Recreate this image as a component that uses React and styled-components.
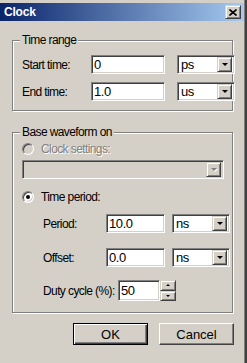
import React from "react";
import styled, { createGlobalStyle, css } from "styled-components";

const GlobalStyle = createGlobalStyle`
  html, body {
    margin: 0;
    padding: 0;
    background: #D4D0C8;
  }
  body {
    font-family: "Liberation Sans", Arial, sans-serif;
    font-size: 12px;
    letter-spacing: -0.6px;
    color: #000;
  }
`

// bordas classicas do windows
const sunken = css`
  border: 1px solid;
  border-color: #808080 #fff #fff #808080;
  box-shadow: inset 1px 1px 0 #404040, inset -1px -1px 0 #D4D0C8;
`
const raised = css`
  border: 1px solid;
  border-color: #D4D0C8 #404040 #404040 #D4D0C8;
  box-shadow: inset 1px 1px 0 #fff, inset -1px -1px 0 #808080;
`

const Janela = styled.div`
  box-sizing: border-box;
  width: 247px;
  height: 363px;
  padding: 3px 1px 0 0;
  border-right: 2px solid #404040;
  box-shadow: inset -1px 0 0 #808080;
  display: flex;
  flex-direction: column;
  overflow: hidden;
`
const BarraTitulo = styled.div`
  height: 18px;
  display: flex;
  align-items: center;
  justify-content: space-between;
  padding: 0 3px 0 4px;
  background: linear-gradient(to right, #0A246A, #A6CAF0);
  color: #fff;
  font-weight: bold;
  font-size: 12px;
  letter-spacing: -0.2px;
`
const BotaoFechar = styled.div`
  box-sizing: border-box;
  width: 16px;
  height: 14px;
  background: #D4D0C8;
  ${raised};
  display: flex;
  align-items: center;
  justify-content: center;
`
const Corpo = styled.div`
  display: flex;
  flex-direction: column;
  padding: 19px 0 0 12px;
`
const Grupo = styled.div`
  box-sizing: border-box;
  width: 221px;
  border: 1px solid #808080;
  box-shadow: inset 1px 1px 0 #fff, 1px 1px 0 #fff;
  display: flex;
  flex-direction: column;
  padding: 0 9px ${p => p.$bottom}px 9px;
  margin-top: ${p => p.$top}px;
`
const Legenda = styled.div`
  align-self: flex-start;
  height: 14px;
  line-height: 14px;
  margin: -8px 0 0 -2px;
  padding: 0 2px;
  background: #D4D0C8;
`
const Linha = styled.div`
  display: grid;
  grid-template-columns: ${p => p.$cols};
  column-gap: ${p => p.$gap}px;
  align-items: center;
  height: 19px;
  margin-top: ${p => p.$top}px;
  padding-left: ${p => p.$indent || 0}px;
`
const Rotulo = styled.span`
  white-space: nowrap;
`
const Campo = styled.input`
  box-sizing: border-box;
  width: 100%;
  height: 19px;
  ${sunken};
  background: #fff;
  font: inherit;
  font-size: 13px;
  letter-spacing: -0.4px;
  padding: 0 0 0 2px;
  outline: none;
`
const Combo = styled.div`
  box-sizing: border-box;
  height: 19px;
  width: ${p => (p.$w ? p.$w + "px" : "100%")};
  ${sunken};
  background: ${p => (p.$disabled ? "#D4D0C8" : "#fff")};
  display: flex;
  align-items: center;
  justify-content: space-between;
  padding: 2px;
  font-size: 13px;
  span { padding-left: 1px; }
`
const SetaBotao = styled.div`
  box-sizing: border-box;
  width: 15px;
  height: 15px;
  background: #D4D0C8;
  ${raised};
  display: flex;
  align-items: center;
  justify-content: center;
`
const Triangulo = styled.div`
  width: 0;
  height: 0;
  border-left: ${p => p.$s}px solid transparent;
  border-right: ${p => p.$s}px solid transparent;
  ${p => (p.$up ? "border-bottom" : "border-top")}: ${p => p.$s}px solid ${p => (p.$disabled ? "#808080" : "#000")};
  filter: ${p => (p.$disabled ? "drop-shadow(1px 1px 0 #fff)" : "none")};
`
const RadioLinha = styled.label`
  display: flex;
  align-items: center;
  gap: 7px;
  height: 14px;
  margin-top: ${p => p.$top}px;
  color: ${p => (p.$disabled ? "#808080" : "#000")};
  text-shadow: ${p => (p.$disabled ? "1px 1px 0 #fff" : "none")};
`
const Radio = styled.span`
  box-sizing: border-box;
  width: 12px;
  height: 12px;
  border-radius: 50%;
  border: 1px solid;
  border-color: #808080 #fff #fff #808080;
  box-shadow: inset 1px 1px 0 #404040, inset -1px -1px 0 #D4D0C8;
  background: ${p => (p.$disabled ? "#D4D0C8" : "#fff")};
  display: flex;
  align-items: center;
  justify-content: center;
  &::after {
    content: "";
    width: 4px;
    height: 4px;
    border-radius: 50%;
    background: #000;
    display: ${p => (p.$checked ? "block" : "none")};
  }
`
const ComboDesativado = styled.div`
  margin-top: 4px;
`
const Spin = styled.div`
  display: flex;
  height: 21px;
  ${Campo} {
    width: 42px;
    height: 21px;
  }
`
const SpinBotoes = styled.div`
  display: flex;
  flex-direction: column;
  width: 16px;
`
const SpinBotao = styled.div`
  box-sizing: border-box;
  flex: 1;
  background: #D4D0C8;
  ${raised};
  display: flex;
  align-items: center;
  justify-content: center;
`
const Botoes = styled.div`
  display: flex;
  justify-content: flex-end;
  gap: 11px;
  width: 222px;
  margin-top: 10px;
`
const Botao = styled.button`
  box-sizing: border-box;
  width: 75px;
  height: 22px;
  background: #D4D0C8;
  font: inherit;
  font-size: 13px;
  color: #000;
  padding: 0;
  ${p =>
    p.$default
      ? css`
          border: 1px solid #000;
          box-shadow: inset 1px 1px 0 #fff, inset -1px -1px 0 #404040, inset -2px -2px 0 #808080;
        `
      : css`
          border: 1px solid;
          border-color: #fff #404040 #404040 #fff;
          box-shadow: inset -1px -1px 0 #808080;
        `}
`

const ComboUnidade = ({ valor }) => (
  <Combo>
    <span>{valor}</span>
    <SetaBotao>
      <Triangulo $s={3.5} />
    </SetaBotao>
  </Combo>
)

export default function App() {
  return (
    <Janela>
      <GlobalStyle />
      <BarraTitulo>
        <span>Clock</span>
        <BotaoFechar>
          <svg width="8" height="7" viewBox="0 0 8 7">
            <path d="M0.5 0.5 L7.5 6.5 M7.5 0.5 L0.5 6.5" stroke="#000" strokeWidth="1.6" />
          </svg>
        </BotaoFechar>
      </BarraTitulo>

      <Corpo>
        <Grupo $top={0} $bottom={9}>
          <Legenda>Time range</Legenda>
          <Linha $cols="57px 74px 58px" $gap={12} $top={8}>
            <Rotulo>Start time:</Rotulo>
            <Campo defaultValue="0" />
            <ComboUnidade valor="ps" />
          </Linha>
          <Linha $cols="57px 74px 58px" $gap={12} $top={8}>
            <Rotulo>End time:</Rotulo>
            <Campo defaultValue="1.0" />
            <ComboUnidade valor="us" />
          </Linha>
        </Grupo>

        <Grupo $top={21} $bottom={13}>
          <Legenda>Base waveform on</Legenda>
          <RadioLinha $top={3} $disabled>
            <Radio $disabled />
            Clock settings:
          </RadioLinha>
          <ComboDesativado>
            <Combo $disabled $w={202}>
              <span />
              <SetaBotao>
                <Triangulo $s={3.5} $disabled />
              </SetaBotao>
            </Combo>
          </ComboDesativado>
          <RadioLinha $top={11}>
            <Radio $checked />
            Time period:
          </RadioLinha>
          <Linha $cols="56px 59px 58px" $gap={7} $top={10} $indent={21}>
            <Rotulo>Period:</Rotulo>
            <Campo defaultValue="10.0" />
            <ComboUnidade valor="ns" />
          </Linha>
          <Linha $cols="56px 59px 58px" $gap={7} $top={15} $indent={21}>
            <Rotulo>Offset:</Rotulo>
            <Campo defaultValue="0.0" />
            <ComboUnidade valor="ns" />
          </Linha>
          <Linha $cols="75px auto" $gap={0} $top={13} $indent={21}>
            <Rotulo>Duty cycle (%):</Rotulo>
            <Spin>
              <Campo defaultValue="50" />
              <SpinBotoes>
                <SpinBotao>
                  <Triangulo $s={2} $up />
                </SpinBotao>
                <SpinBotao>
                  <Triangulo $s={2} />
                </SpinBotao>
              </SpinBotoes>
            </Spin>
          </Linha>
        </Grupo>

        <Botoes>
          <Botao $default>OK</Botao>
          <Botao>Cancel</Botao>
        </Botoes>
      </Corpo>
    </Janela>
  )
}
